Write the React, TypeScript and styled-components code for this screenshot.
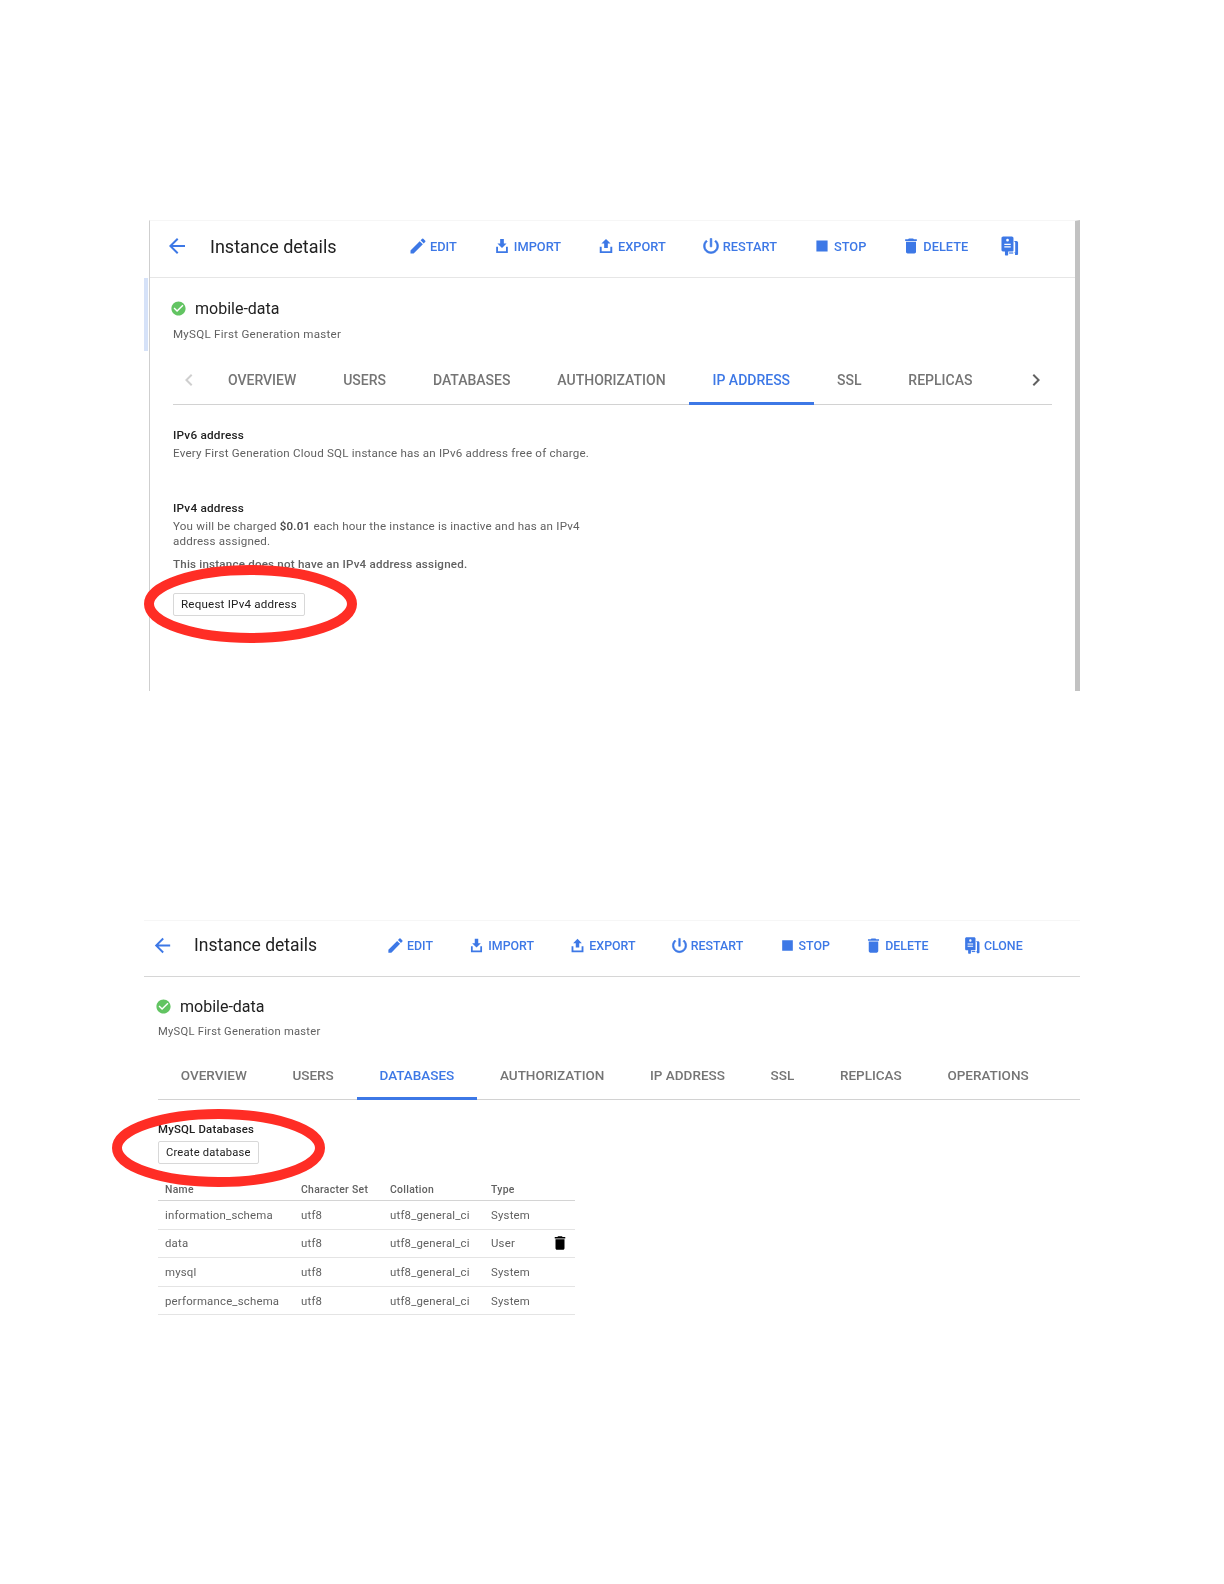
import React from "react";
import styled, { createGlobalStyle } from "styled-components";
import {
  MdArrowBack,
  MdCheckCircle,
  MdChevronLeft,
  MdChevronRight,
  MdDelete,
  MdEdit,
  MdStop,
} from "react-icons/md";

const BLUE = "#3d78e6";

const Global = createGlobalStyle`
  html, body { margin: 0; padding: 0; background: #fff; }
  body { font-family: Roboto, "Liberation Sans", sans-serif; -webkit-font-smoothing: antialiased; }
`;

const Page = styled.div`
  width: 1224px;
  height: 1584px;
  padding-top: 220px;
  box-sizing: border-box;
  overflow: hidden;
  filter: blur(0.35px);
`;

const Panel = styled.section<{ $first?: boolean }>`
  position: relative;
  box-sizing: border-box;
  border-top: 1px solid #f6f6f6;
  margin-left: ${(p) => (p.$first ? "149px" : "144px")};
  margin-top: ${(p) => (p.$first ? "0" : "229px")};
  width: ${(p) => (p.$first ? "931px" : "936px")};
  height: ${(p) => (p.$first ? "471px" : "auto")};
  border-left: ${(p) => (p.$first ? "1px solid #cfcfcf" : "none")};
  border-right: ${(p) => (p.$first ? "5px solid #c2c2c2" : "none")};
`;

const SideStrip = styled.div`
  position: absolute;
  left: -6px;
  top: 57px;
  width: 4px;
  height: 73px;
  background: #d6e2f8;
`;

const Header = styled.header<{ $first?: boolean }>`
  display: flex;
  align-items: center;
  box-sizing: border-box;
  height: ${(p) => (p.$first ? "57px" : "56px")};
  padding-left: ${(p) => (p.$first ? "15px" : "7px")};
  padding-bottom: ${(p) => (p.$first ? "6px" : "7px")};
  border-bottom: 1px solid ${(p) => (p.$first ? "#e6e6e6" : "#d6d6d6")};
  color: ${BLUE};
`;

const BackIcon = styled(MdArrowBack)<{ $first?: boolean }>`
  flex: none;
  font-size: ${(p) => (p.$first ? "24px" : "23px")};
  margin-right: ${(p) => (p.$first ? "21px" : "20px")};
`;

const Title = styled.h1<{ $first?: boolean }>`
  flex: none;
  margin: 0;
  width: ${(p) => (p.$first ? "198px" : "192px")};
  font-size: ${(p) => (p.$first ? "18px" : "17.5px")};
  font-weight: 400;
  color: #212121;
  white-space: nowrap;
`;

const Actions = styled.div<{ $first?: boolean }>`
  display: flex;
  align-items: center;
  gap: ${(p) => (p.$first ? "35px" : "34.3px")};
`;

const Action = styled.span<{ $first?: boolean }>`
  display: inline-flex;
  align-items: center;
  gap: 2px;
  font-size: ${(p) => (p.$first ? "12.8px" : "12.4px")};
  font-weight: 500;
  color: ${BLUE};
  white-space: nowrap;
  svg {
    flex: none;
    width: ${(p) => (p.$first ? "20px" : "19px")};
    height: ${(p) => (p.$first ? "20px" : "19px")};
  }
`;

const StopIcon = styled(MdStop)`
  transform: scale(1.12);
`;

const CloneOnly = styled.span`
  display: inline-flex;
  margin-left: -4px;
  color: ${BLUE};
  svg { width: 22px; height: 22px; }
`;

const Summary = styled.div<{ $first?: boolean }>`
  padding: ${(p) => (p.$first ? "19px 0 0 23px" : "18px 0 0 14px")};
`;

const NameRow = styled.div`
  display: flex;
  align-items: center;
  gap: 8px;
  height: 22px;
  margin-left: -3px;
  font-size: 16px;
  color: #212121;
  svg { color: #62c462; font-size: 17px; }
`;

const SubTitle = styled.div<{ $first?: boolean }>`
  margin-top: ${(p) => (p.$first ? "7px" : "6.5px")};
  height: 16px;
  line-height: 16px;
  font-size: ${(p) => (p.$first ? "11.6px" : "11.2px")};
  letter-spacing: 0.25px;
  color: #616161;
`;

const TabRow = styled.nav<{ $first?: boolean }>`
  display: flex;
  align-items: stretch;
  height: 48px;
  box-sizing: content-box;
  margin: ${(p) => (p.$first ? "14px 0 0 23px" : "11.5px 0 0 14px")};
  width: ${(p) => (p.$first ? "879px" : "922px")};
  border-bottom: 1px solid #d2d2d2;
`;

const Tab = styled.span<{ $active?: boolean; $first?: boolean }>`
  display: flex;
  align-items: center;
  box-sizing: border-box;
  height: 49px;
  padding: ${(p) => (p.$first ? "2px 23.45px 0" : "1px 22.85px 0")};
  font-size: ${(p) => (p.$first ? "14px" : "13.5px")};
  font-weight: 500;
  white-space: nowrap;
  color: ${(p) => (p.$active ? BLUE : "#757575")};
  border-bottom: 3px solid ${(p) => (p.$active ? BLUE : "transparent")};
`;

const Chevron = styled.span<{ $end?: boolean }>`
  display: flex;
  align-items: center;
  font-size: 24px;
  color: ${(p) => (p.$end ? "#616161" : "#cfcfcf")};
  margin: ${(p) => (p.$end ? "0 4px 0 auto" : "0 3.5px 0 4px")};
`;

const Body = styled.div`
  padding: 22px 0 0 23px;
`;

const Heading = styled.h2<{ $small?: boolean }>`
  margin: 0;
  height: 16px;
  line-height: 16px;
  font-size: ${(p) => (p.$small ? "11.4px" : "11.8px")};
  font-weight: 500;
  letter-spacing: 0.2px;
  color: #212121;
`;

const Text = styled.p<{ $mt?: number; $strong?: boolean }>`
  margin: ${(p) => p.$mt ?? 3}px 0 0;
  width: 440px;
  line-height: 15px;
  font-size: 11.6px;
  letter-spacing: 0.2px;
  font-weight: ${(p) => (p.$strong ? 500 : 400)};
  color: #616161;
  b { font-weight: 500; color: #424242; }
`;

const Group = styled.div<{ $mt?: number }>`
  margin-top: ${(p) => p.$mt ?? 0}px;
`;

const Button = styled.button<{ $mt: number; $small?: boolean }>`
  display: block;
  box-sizing: border-box;
  height: 23px;
  margin: ${(p) => p.$mt}px 0 0;
  padding: 0 7px;
  background: #fff;
  border: 1px solid #d8d8d8;
  border-radius: 2px;
  font-family: Roboto, "Liberation Sans", sans-serif;
  font-size: ${(p) => (p.$small ? "11.2px" : "11.6px")};
  letter-spacing: 0.2px;
  color: #212121;
`;

const Ring = styled.svg<{ $left: number; $top: number }>`
  position: absolute;
  left: ${(p) => p.$left}px;
  top: ${(p) => p.$top}px;
  width: 213px;
  height: 78px;
  pointer-events: none;
`;

const DbSection = styled.div`
  padding: 21px 0 0 14px;
`;

const Table = styled.table`
  table-layout: fixed;
  width: 417px;
  margin-top: 15px;
  border-collapse: collapse;
  font-size: 11.4px;
  letter-spacing: 0.2px;
  color: #616161;
`;

const Th = styled.th<{ $w?: number }>`
  width: ${(p) => (p.$w ? `${p.$w}px` : "auto")};
  height: 21px;
  padding: 0 0 0 7px;
  text-align: left;
  font-size: 10.4px;
  font-weight: 500;
  letter-spacing: 0.3px;
  color: #616161;
  border-bottom: 1px solid #d4d4d4;
`;

const Tr = styled.tr`
  height: 28.6px;
`;

const Td = styled.td`
  padding: 0 0 0 7px;
  border-bottom: 1px solid #e4e4e4;
  white-space: nowrap;
`;

const TrashCell = styled(Td)`
  padding: 0 6px 0 0;
  text-align: right;
  color: #000;
  line-height: 0;
  svg { font-size: 18px; }
`;

const ImportIcon = () => (
  <svg viewBox="0 0 24 24" fill="currentColor">
    <path d="M9.800 3.500h4.400v5.500h3.300L12 14.500 6.500 9h3.300z" />
    <path d="M5 13h2.200v5.300h9.600V13H19v7.500H5z" />
  </svg>
);

const ExportIcon = () => (
  <svg viewBox="0 0 24 24" fill="currentColor">
    <path d="M9.800 14.500h4.400V9h3.300L12 3.500 6.500 9h3.300z" />
    <path d="M4.500 13h2.300v5.300h10.400V13h2.300v7.500h-15z" />
  </svg>
);

const PowerIcon = () => (
  <svg viewBox="0 0 24 24" fill="currentColor" stroke="currentColor" strokeWidth="0.7">
    <path d="M13 3h-2v10h2V3zm4.830 2.170l-1.420 1.420C17.990 7.860 19 9.810 19 12c0 3.870-3.130 7-7 7s-7-3.130-7-7c0-2.190 1.010-4.140 2.580-5.420L6.170 5.170C4.230 6.820 3 9.260 3 12c0 4.970 4.030 9 9 9s9-4.030 9-9c0-2.740-1.230-5.180-3.170-6.830z" />
  </svg>
);

const CloneIcon = () => (
  <svg viewBox="0 0 24 24" fill="currentColor">
    <path d="M15.500 6.500h3.500c1 0 1.800.8 1.800 1.800v12.400c0 .6-.4 1-1 1h-2.300v-2h-.8v-.7h1V8.500c0-.8-.8-2-2.200-2z" />
    <path
      fillRule="evenodd"
      d="M4.500 1.500h9.500c1 0 1.800.8 1.800 1.800V17c0 .6-.4 1-1 1h-4.800v3.500c0 .5-.3.8-.8.8H7.200c-.4 0-.7-.3-.7-.8V18H4.300c-.9 0-1.600-.7-1.600-1.600V3.300c0-1 .8-1.800 1.800-1.800zM9.300 4.200a1.500 1.500 0 1 0 0 3 1.500 1.500 0 0 0 0-3zM5.800 9.500v1.300h7V9.500zM5.800 12.300v1.300h7v-1.300z"
    />
    <path d="M11 19h4.500v1.300H11z" />
  </svg>
);

const RedRing = ({ left, top }: { left: number; top: number }) => (
  <Ring $left={left} $top={top} viewBox="0 0 213 78">
    <ellipse cx="106.500" cy="39" rx="101.500" ry="34" fill="none" stroke="#ff2d25" strokeWidth="10" />
  </Ring>
);

const actions = [
  { label: "EDIT", icon: <MdEdit /> },
  { label: "IMPORT", icon: <ImportIcon /> },
  { label: "EXPORT", icon: <ExportIcon /> },
  { label: "RESTART", icon: <PowerIcon /> },
  { label: "STOP", icon: <StopIcon /> },
  { label: "DELETE", icon: <MdDelete /> },
];

const InstanceHeader = ({ first }: { first?: boolean }) => (
  <Header $first={first}>
    <BackIcon $first={first} />
    <Title $first={first}>Instance details</Title>
    <Actions $first={first}>
      {actions.map((a) => (
        <Action key={a.label} $first={first}>
          {a.icon}
          {a.label}
        </Action>
      ))}
      {first ? (
        <CloneOnly>
          <CloneIcon />
        </CloneOnly>
      ) : (
        <Action>
          <CloneIcon />
          CLONE
        </Action>
      )}
    </Actions>
  </Header>
);

const InstanceSummary = ({ first }: { first?: boolean }) => (
  <Summary $first={first}>
    <NameRow>
      <MdCheckCircle />
      mobile-data
    </NameRow>
    <SubTitle $first={first}>MySQL First Generation master</SubTitle>
  </Summary>
);

const rows = [
  ["information_schema", "System"],
  ["data", "User"],
  ["mysql", "System"],
  ["performance_schema", "System"],
];

export default function App() {
  return (
    <Page>
      <Global />
      <Panel $first>
        <SideStrip />
        <InstanceHeader first />
        <InstanceSummary first />
        <TabRow $first>
          <Chevron>
            <MdChevronLeft />
          </Chevron>
          {["OVERVIEW", "USERS", "DATABASES", "AUTHORIZATION", "IP ADDRESS", "SSL", "REPLICAS"].map((t) => (
            <Tab key={t} $first $active={t === "IP ADDRESS"}>
              {t}
            </Tab>
          ))}
          <Chevron $end>
            <MdChevronRight />
          </Chevron>
        </TabRow>
        <Body>
          <Heading>IPv6 address</Heading>
          <Text>Every First Generation Cloud SQL instance has an IPv6 address free of charge.</Text>
          <Group $mt={39}>
            <Heading>IPv4 address</Heading>
            <Text>
              You will be charged <b>$0.01</b> each hour the instance is inactive and has an IPv4 address assigned.
            </Text>
            <Text $mt={7.5} $strong>
              This instance does not have an IPv4 address assigned.
            </Text>
            <Button $mt={21}>Request IPv4 address</Button>
          </Group>
        </Body>
        <RedRing left={-6} top={344} />
      </Panel>

      <Panel>
        <InstanceHeader />
        <InstanceSummary />
        <TabRow>
          {["OVERVIEW", "USERS", "DATABASES", "AUTHORIZATION", "IP ADDRESS", "SSL", "REPLICAS", "OPERATIONS"].map((t) => (
            <Tab key={t} $active={t === "DATABASES"}>
              {t}
            </Tab>
          ))}
        </TabRow>
        <DbSection>
          <Heading $small>MySQL Databases</Heading>
          <Button $mt={4} $small>
            Create database
          </Button>
          <Table>
            <thead>
              <tr>
                <Th $w={129}>Name</Th>
                <Th $w={82}>Character Set</Th>
                <Th $w={94}>Collation</Th>
                <Th $w={53}>Type</Th>
                <Th />
              </tr>
            </thead>
            <tbody>
              {rows.map(([name, type]) => (
                <Tr key={name}>
                  <Td>{name}</Td>
                  <Td>utf8</Td>
                  <Td>utf8_general_ci</Td>
                  <Td>{type}</Td>
                  {type === "User" ? (
                    <TrashCell>
                      <MdDelete />
                    </TrashCell>
                  ) : (
                    <Td />
                  )}
                </Tr>
              ))}
            </tbody>
          </Table>
        </DbSection>
        <RedRing left={-32} top={188} />
      </Panel>
    </Page>
  );
}
